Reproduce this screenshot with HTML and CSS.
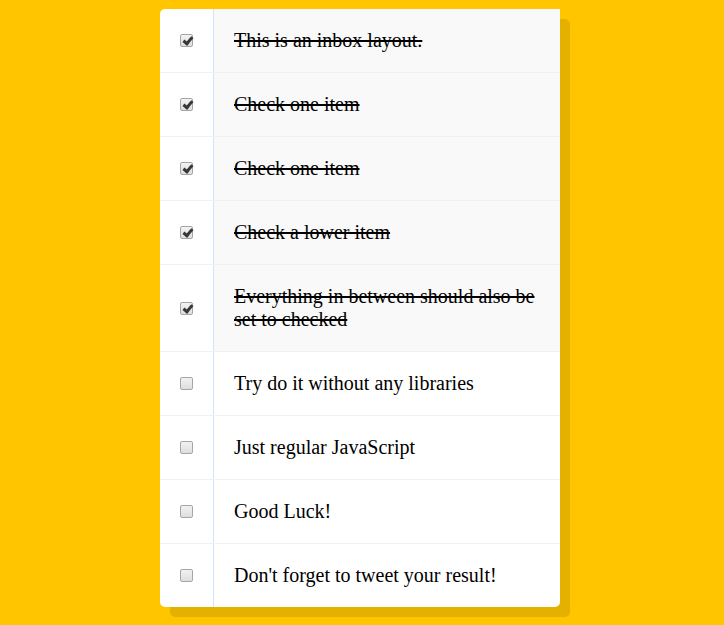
FILE: index.html
```html
<!DOCTYPE html>
<html>
<head>
<meta charset="utf-8">
<link rel="stylesheet" href="styles.css">
</head>
<body>
<div class="inbox">
  <div class="item"><input type="checkbox" checked><p>This is an inbox layout.</p></div>
  <div class="item"><input type="checkbox" checked><p>Check one item</p></div>
  <div class="item"><input type="checkbox" checked><p>Check one item</p></div>
  <div class="item"><input type="checkbox" checked><p>Check a lower item</p></div>
  <div class="item"><input type="checkbox" checked><p>Everything in between should also be set to checked</p></div>
  <div class="item"><input type="checkbox"><p>Try do it without any libraries</p></div>
  <div class="item"><input type="checkbox"><p>Just regular JavaScript</p></div>
  <div class="item"><input type="checkbox"><p>Good Luck!</p></div>
  <div class="item"><input type="checkbox"><p>Don't forget to tweet your result!</p></div>
</div>
</body>
</html>
```

FILE: styles.css
```css
html {
  background: #ffc600;
  font-family: "Liberation Serif", serif;
}
body {
  margin: 0;
  padding: 9px 0 18px 160px;
}
.inbox {
  width: 400px;
  background: white;
  border-radius: 5px;
  box-shadow: 10px 10px 0 rgba(0,0,0,0.1);
}
.item {
  display: flex;
  align-items: center;
  border-bottom: 1px solid #f1f1f1;
}
.item:last-child {
  border-bottom: 0;
}
.item input[type="checkbox"] {
  -webkit-appearance: none;
  appearance: none;
  position: relative;
  box-sizing: border-box;
  width: 13px;
  height: 13px;
  margin: 20px;
  border: 1px solid #a6a6a6;
  border-radius: 2px;
  background: linear-gradient(#f2f2f2, #dedede);
  flex: none;
}
.item input[type="checkbox"]:checked::after {
  content: "";
  position: absolute;
  left: 3.5px;
  top: 0;
  width: 3px;
  height: 7px;
  border-right: 3px solid #383838;
  border-bottom: 3px solid #383838;
  transform: rotate(40deg);
}
.item p {
  margin: 0;
  padding: 20px;
  flex: 1;
  font-family: "Liberation Serif", serif;
  font-size: 20px;
  font-weight: 200;
  border-left: 1px solid #d1e2ff;
}
.item input:checked + p {
  background: #f9f9f9;
  text-decoration: line-through;
}
```
